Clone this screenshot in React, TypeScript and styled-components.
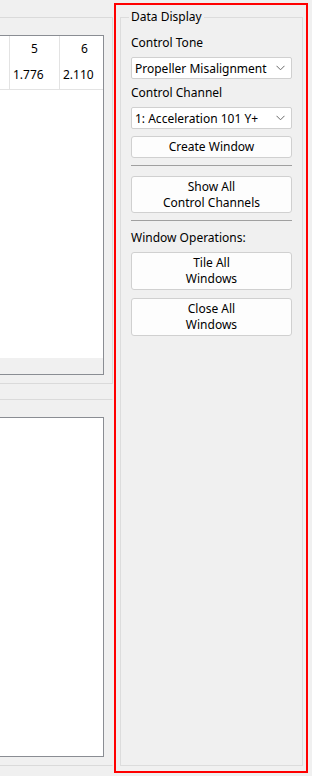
import React from "react";
import styled, { createGlobalStyle } from "styled-components";

const Global = createGlobalStyle`
  html, body {
    margin: 0;
    padding: 0;
    background: #f0f0f0;
  }
  body {
    width: 312px;
    height: 776px;
    overflow: hidden;
    font-family: "Noto Sans", "Open Sans", sans-serif;
    font-size: 12px;
    color: #000;
  }
`;

const Root = styled.div`
  display: flex;
  width: 312px;
  height: 776px;
  overflow: hidden;
`;

const LeftPane = styled.div`
  flex: none;
  width: 114px;
  overflow: hidden;
  padding-top: 17px;
  display: flex;
  flex-direction: column;
`;

const Frame = styled.div<{ $right?: boolean }>`
  box-sizing: border-box;
  margin-left: -300px;
  width: 413px;
  height: 367px;
  border-top: 1px solid #dadada;
  border-bottom: 1px solid #dadada;
  border-right: 1px solid ${(p) => (p.$right ? "#dadada" : "transparent")};
  padding: 17px 8px 8px 0;
  display: flex;
  flex-direction: column;
  & + & {
    margin-top: 15px;
  }
`;

const WhiteBox = styled.div`
  flex: 1;
  background: #fff;
  border: 1px solid #8a8d93;
  border-left: none;
  overflow: hidden;
  display: flex;
  flex-direction: column;
`;

const Grid = styled.div`
  flex: 1;
`;

const GridRow = styled.div`
  display: flex;
  justify-content: flex-end;
  margin-right: -7px;
`;

const HeadCell = styled.div`
  flex: none;
  box-sizing: border-box;
  width: 50px;
  height: 25px;
  border-right: 1px solid #e3e3e3;
  display: flex;
  align-items: center;
  justify-content: center;
  font-size: 12px;
`;

const ValueCell = styled.div`
  flex: none;
  box-sizing: border-box;
  width: 50px;
  height: 29px;
  border-right: 1px solid #e3e3e3;
  border-bottom: 1px solid #e3e3e3;
  display: flex;
  align-items: center;
  padding-left: 3px;
  padding-bottom: 1px;
  font-size: 12px;
`;

const HScroll = styled.div`
  flex: none;
  height: 16px;
  background: #f0f0f0;
`;

const RightPane = styled.div`
  flex: none;
  width: 198px;
  padding-top: 3px;
`;

const Highlight = styled.div`
  box-sizing: border-box;
  width: 194px;
  height: 770px;
  border: 2px solid #ff0000;
  padding: 12px 3px 5px 4px;
  display: flex;
`;

const GroupBox = styled.div`
  position: relative;
  flex: 1;
  border: 1px solid #dcdcdc;
  padding: 17px 10px 0 10px;
  display: flex;
  flex-direction: column;
`;

const GroupTitle = styled.div`
  position: absolute;
  top: -9px;
  left: 8px;
  padding: 0 2px;
  background: #f0f0f0;
  line-height: 16px;
`;

const Label = styled.div<{ $mt?: number }>`
  line-height: 16px;
  margin-top: ${(p) => p.$mt ?? 0}px;
  white-space: nowrap;
`;

const SelectBox = styled.div<{ $mt: number }>`
  box-sizing: border-box;
  height: 22px;
  margin-top: ${(p) => p.$mt}px;
  background: #fff;
  border: 1px solid #d0d0d0;
  border-radius: 2px;
  display: flex;
  align-items: center;
  padding: 0 6px 0 3px;
  white-space: nowrap;
`;

const SelectText = styled.span`
  flex: 1;
  overflow: hidden;
`;

const Chevron = styled.svg`
  flex: none;
  width: 9px;
  height: 6px;
`;

const Button = styled.div<{ $mt: number; $h: number }>`
  box-sizing: border-box;
  height: ${(p) => p.$h}px;
  margin-top: ${(p) => p.$mt}px;
  background: #fdfdfd;
  border: 1px solid #d0d0d0;
  border-radius: 3px;
  display: flex;
  flex-direction: column;
  align-items: center;
  justify-content: center;
  line-height: 16px;
  text-align: center;
`;

const Separator = styled.div<{ $mt: number }>`
  height: 1px;
  margin-top: ${(p) => p.$mt}px;
  background: #a0a0a0;
`;

const cols = [
  { h: "", v: "" },
  { h: "5", v: "1.776" },
  { h: "6", v: "2.110" },
];

const Select: React.FC<{ mt: number; text: string }> = ({ mt, text }) => (
  <SelectBox $mt={mt}>
    <SelectText>{text}</SelectText>
    <Chevron viewBox="0 0 9 6">
      <path d="M0.5 0.8 L4.5 4.8 L8.5 0.8" fill="none" stroke="#6a6a6a" strokeWidth="1" />
    </Chevron>
  </SelectBox>
);

export default function App() {
  return (
    <Root>
      <Global />
      <LeftPane>
        <Frame $right>
          <WhiteBox>
            <Grid>
              <GridRow>
                {cols.map((c, i) => (
                  <HeadCell key={i}>{c.h}</HeadCell>
                ))}
              </GridRow>
              <GridRow>
                {cols.map((c, i) => (
                  <ValueCell key={i}>{c.v}</ValueCell>
                ))}
              </GridRow>
            </Grid>
            <HScroll />
          </WhiteBox>
        </Frame>
        <Frame>
          <WhiteBox />
        </Frame>
      </LeftPane>
      <RightPane>
        <Highlight>
          <GroupBox>
            <GroupTitle>Data Display</GroupTitle>
            <Label>Control Tone</Label>
            <Select mt={6} text="Propeller Misalignment" />
            <Label $mt={6}>Control Channel</Label>
            <Select mt={6} text="1: Acceleration 101 Y+" />
            <Button $mt={7} $h={22}>Create Window</Button>
            <Separator $mt={7} />
            <Button $mt={10} $h={37}>
              <span>Show All</span>
              <span>Control Channels</span>
            </Button>
            <Separator $mt={7} />
            <Label $mt={9}>Window Operations:</Label>
            <Button $mt={6} $h={38}>
              <span>Tile All</span>
              <span>Windows</span>
            </Button>
            <Button $mt={8} $h={38}>
              <span>Close All</span>
              <span>Windows</span>
            </Button>
          </GroupBox>
        </Highlight>
      </RightPane>
    </Root>
  );
}
